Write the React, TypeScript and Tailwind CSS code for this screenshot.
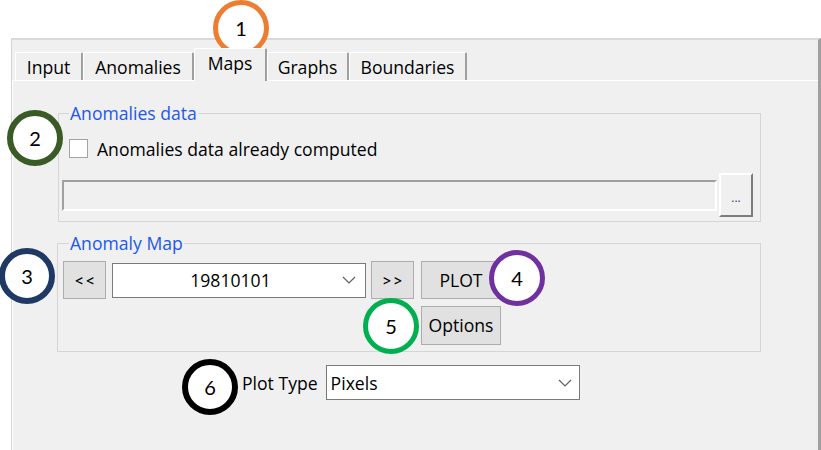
const Chevron = ({ className }: { className?: string }) => (
  <svg width="14" height="8" viewBox="0 0 14 8" className={className}>
    <path d="M1 1 L7 7 L13 1" fill="none" stroke="#5f5f5f" strokeWidth="1.2" />
  </svg>
);

const Marker = ({ n, className }: { n: string; className: string }) => (
  <div
    className={`absolute w-[56px] h-[56px] rounded-full bg-white flex items-center justify-center font-['Lato',sans-serif] text-[20px] text-black ${className}`}
  >
    {n}
  </div>
);

const tabs = [
  { label: "Input", w: "w-[68px]" },
  { label: "Anomalies", w: "w-[111px]" },
  { label: "Maps", w: "w-[73px]", active: true },
  { label: "Graphs", w: "w-[82px]" },
  { label: "Boundaries", w: "w-[118px]" },
];

const App = () => {
  return (
    <div className="relative w-[821px] h-[450px] bg-white overflow-hidden font-['Open_Sans',sans-serif] text-[17.6px] text-black">
      <div className="mt-[38px] ml-[11px] w-[810px] h-[412px] flex flex-col bg-[#f0f0f0] border-t-2 border-t-[#d9d9d9] border-l border-l-[#d4d4d4] border-r-[3px] border-r-[#a0a0a0]">
        {/* tab strip */}
        <div className="h-[40px] flex items-end pl-[3px]">
          {tabs.map((t) =>
            t.active ? (
              <div
                key={t.label}
                className={`${t.w} h-[33px] -mb-px relative z-10 flex items-center justify-center pb-[3px] bg-[#f0f0f0] border-t border-l border-white border-r-2 border-r-[#a0a0a0] rounded-t-[2px]`}
              >
                {t.label}
              </div>
            ) : (
              <div
                key={t.label}
                className={`${t.w} h-[28px] flex items-center justify-center pt-[1px] bg-[#f0f0f0] border-t border-l border-white border-r-2 border-r-[#a0a0a0] rounded-t-[2px]`}
              >
                {t.label}
              </div>
            )
          )}
        </div>

        {/* tab page */}
        <div className="flex-1 flex flex-col border-t border-l border-white">
          {/* Anomalies data group */}
          <fieldset className="mt-[21px] ml-[45px] w-[703px] border border-[#d5d5d5] px-0 pb-[4px]">
            <legend className="ml-[10px] px-[1px] h-[22px] leading-[22px] text-[#2157ee]">Anomalies data</legend>
            <div className="mt-[15px] ml-[10px] h-[19px] flex items-center gap-[9px]">
              <div className="w-[19px] h-[19px] bg-white border border-[#a3a3a3]" />
              <span className="leading-none mt-[3px]">Anomalies data already computed</span>
            </div>
            <div className="mt-[15px] ml-[3px] flex items-center gap-[2px]">
              <div className="w-[655px] h-[31px] bg-[#f0f0f0] border-t-2 border-l-2 border-[#a0a0a0] border-b-2 border-r-2 border-b-white border-r-white" />
              <div className="w-[34px] h-[44px] flex items-end justify-center pb-[11px] bg-[#f0f0f0] border-t-2 border-l-2 border-white border-b-2 border-r-2 border-b-[#7d7d7d] border-r-[#7d7d7d] text-[12px] leading-none text-[#404060]">
                ...
              </div>
            </div>
          </fieldset>

          {/* Anomaly Map group */}
          <fieldset className="mt-[10px] ml-[44px] w-[704px] border border-[#d5d5d5] px-0 pb-[6px]">
            <legend className="ml-[11px] px-[1px] h-[22px] leading-[22px] text-[#2157ee]">Anomaly Map</legend>
            <div className="mt-[7px] ml-[5px] h-[38px] flex items-center">
              <button className="w-[43px] h-[38px] bg-[#e1e1e1] border border-[#adadad] text-[14px] font-semibold tracking-[3px] pl-[3px]">
                &lt;&lt;
              </button>
              <div className="ml-[6px] w-[254px] h-[35px] flex items-center bg-white border border-[#7a7a7a]">
                <span className="flex-1 text-center pl-[6px]">19810101</span>
                <Chevron className="mr-[9px]" />
              </div>
              <button className="ml-[5px] w-[43px] h-[38px] bg-[#e1e1e1] border border-[#adadad] text-[14px] font-semibold tracking-[3px] pl-[3px]">
                &gt;&gt;
              </button>
              <button className="ml-[7px] w-[80px] h-[38px] bg-[#e1e1e1] border border-[#adadad]">PLOT</button>
            </div>
            <div className="mt-[7px] ml-[363px]">
              <button className="w-[80px] h-[39px] bg-[#e1e1e1] border border-[#adadad]">Options</button>
            </div>
          </fieldset>

          {/* Plot type */}
          <div className="mt-[13px] ml-[229px] flex items-center gap-[8px]">
            <span className="mt-[2px]">Plot Type</span>
            <div className="w-[254px] h-[35px] flex items-center justify-between pl-[4px] pr-[7px] bg-white border border-[#7a7a7a]">
              <span className="mt-[2px]">Pixels</span>
              <Chevron />
            </div>
          </div>
        </div>
      </div>

      {/* callout markers */}
      <Marker n="1" className="left-[213px] top-0 border-[5px] border-[#ed7d31]" />
      <Marker n="2" className="left-[7px] top-[110px] border-[6px] border-[#3a5a26]" />
      <Marker n="3" className="left-[-1px] top-[248px] border-[6px] border-[#203864]" />
      <Marker n="4" className="left-[489px] top-[250px] border-[5px] border-[#7030a0]" />
      <Marker n="5" className="left-[363px] top-[298px] border-[5px] border-[#00b050]" />
      <Marker n="6" className="left-[182px] top-[359px] border-[6px] border-[#000000]" />
    </div>
  );
};

export default App;
